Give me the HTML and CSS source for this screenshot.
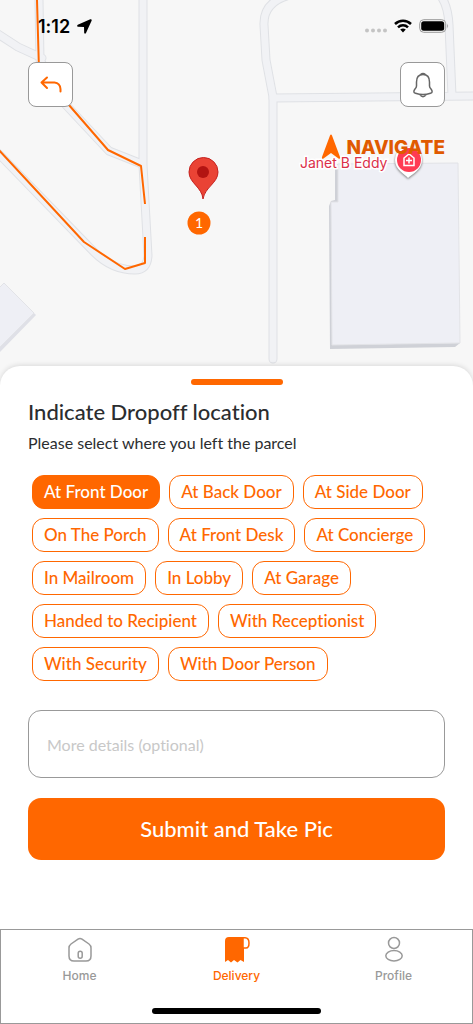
FILE: index.html
```
<!DOCTYPE html>
<html lang="en">
<head>
    <meta charset="utf-8">
    <title>Dropoff location</title>
    <meta name="viewport" content="width=device-width, initial-scale=1">
    <link rel="stylesheet" href="styles.css">
</head>
<body>
    <div class="screen">
        <section class="map">
            <svg class="map-canvas" viewBox="0 0 473 388" preserveAspectRatio="xMidYMin slice">
                <!-- roads: outline first, then the lighter fill -->
                <g class="road-edge">
                    <path d="M-5 32L18 47L42 58M39 0L40 60L65 104L109 151L142 164"/>
                    <path d="M143 -5V165L148 256Q147 270 135 270Q112 270 94 252L-5 150"/>
                    <path d="M290 -5Q263 2 264 25L266 60L273 97V359"/>
                    <path d="M273 98L480 96M440 -5Q448 5 449 25L452 96"/>
                </g>
                <g class="road">
                    <path d="M-5 32L18 47L42 58M39 0L40 60L65 104L109 151L142 164"/>
                    <path d="M143 -5V165L148 256Q147 270 135 270Q112 270 94 252L-5 150"/>
                    <path d="M290 -5Q263 2 264 25L266 60L273 97V359"/>
                    <path d="M273 98L480 96M440 -5Q448 5 449 25L452 96"/>
                </g>
                <!-- buildings -->
                <path class="wall" d="M4 283L36 315L0 352V340L34 313z"/>
                <path class="roof" d="M-2 289L4 283L34 313L-2 349z"/>
                <path class="wall-dark" d="M335 166L338 164V202H332L333 345L460 343L455 347L330 349L329 206L331 201L335 200z"/>
                <path class="roof" d="M338 164L458 163L460 343L332 345L331 202H338z"/>
                <!-- route -->
                <path class="route" d="M37 0L39 70L62 97L108 150L141 166L145 204"/>
                <path class="route" d="M-2 149L84 242L125 269L145 263V237"/>
                <!-- dropoff pin -->
                <path class="pin" d="M203 199C202 187 189 183 189 172A14 14 0 0 1 218 172C218 183 205 187 203 199z"/>
                <circle class="pin-dot" cx="203" cy="172" r="6"/>
                <circle class="stop" cx="199" cy="223" r="11.500"/>
                <text class="stop-number" x="199" y="228">1</text>
                <!-- place marker -->
                <path class="place" d="M408 178C405 174 395 170 395 160A13 13 0 0 1 422 160C422 170 412 174 408 178z"/>
                <circle class="place-dot" cx="409" cy="160" r="12"/>
                <path class="place-icon" d="M404 165.500V158L409 154L414 158V165.500zM409 157.500V163.500M406 160.500H412"/>
                <text class="place-name" x="300" y="168">Janet B Eddy</text>
            </svg>
            <div class="map-overlay">
                <div class="status">
                    <div class="status-group">
                        <span class="time">1:12</span>
                        <svg width="15" height="15" viewBox="0 0 15 15"><path d="M13.300 0.300L0.800 5.800Q-0.600 7.200 1 7.800L7 8L7.200 14Q8 15.500 9 14L14.700 1.500Q14.800 -0.200 13.300 0.300z"/></svg>
                    </div>
                    <div class="status-group">
                        <svg width="22" height="16" viewBox="0 0 22 16" fill="#c4c4c4"><circle cx="2" cy="12.500" r="2"/><circle cx="8" cy="12.500" r="2"/><circle cx="14" cy="12.500" r="2"/><circle cx="20" cy="12.500" r="2"/></svg>
                        <svg width="18" height="14" viewBox="0 0 18 14"><g fill="none" stroke="#000" stroke-width="2.500"><path d="M1 5A11.500 11.500 0 0 1 17 5M4 8.300A7.200 7.200 0 0 1 14 8.300"/></g><path d="M9 13.500L6.200 10.600Q9 8.600 11.800 10.600z"/></svg>
                        <svg width="30" height="14" viewBox="0 0 30 14"><rect x="0.700" y="0.700" width="26" height="12.600" rx="4" fill="#f7f7f7" stroke="#999"/><rect x="2.200" y="2.200" width="23" height="9.600" rx="2.500"/><path d="M28.300 4.500Q30 7 28.300 9.500z" fill="#888"/></svg>
                    </div>
                </div>
                <div class="toolbar">
                    <button type="button" class="square-btn" aria-label="Back">
                        <svg width="24" height="24" viewBox="0 0 24 24" fill="none" stroke="#ff6700" stroke-width="2" stroke-linecap="round" stroke-linejoin="round"><path d="M8 4.500L2.500 9.500L8 15M2.500 9.500H15.500Q21 10 21.500 16V18.500"/></svg>
                    </button>
                    <button type="button" class="square-btn" aria-label="Notifications">
                        <svg width="24" height="28" viewBox="0 0 24 28" fill="none" stroke="#666" stroke-width="1.500" stroke-linejoin="round"><path d="M9.500 3.500Q12 1.500 14.500 3.500M12 3.500Q5.500 3.500 5.500 11V15Q5.500 16.500 4 18Q1.500 21.500 4.500 22.200Q12 25 19.500 22.200Q22.500 21.500 20 18Q18.500 16.500 18.500 15V11Q18.500 3.500 12 3.500zM8.800 23.800Q12 27.500 15.200 23.800"/></svg>
                    </button>
                </div>
                <a href="#" class="navigate">
                    <svg width="20" height="26" viewBox="0 0 20 26"><path d="M9 1.500Q10 -0.500 11 1.500L19 23Q19.500 25.500 17.500 24.500L10 19L2.500 24.500Q0.500 25.500 1 23z" fill="#ff6700"/></svg>
                    NAVIGATE
                </a>
            </div>
        </section>

        <form class="sheet">
            <div class="handle"></div>
            <h1>Indicate Dropoff location</h1>
            <p>Please select where you left the parcel</p>
            <div class="chips">
                <button type="button" class="chip active">At Front Door</button>
                <button type="button" class="chip">At Back Door</button>
                <button type="button" class="chip">At Side Door</button>
                <button type="button" class="chip">On The Porch</button>
                <button type="button" class="chip">At Front Desk</button>
                <button type="button" class="chip">At Concierge</button>
                <button type="button" class="chip">In Mailroom</button>
                <button type="button" class="chip">In Lobby</button>
                <button type="button" class="chip">At Garage</button>
                <button type="button" class="chip">Handed to Recipient</button>
                <button type="button" class="chip">With Receptionist</button>
                <button type="button" class="chip">With Security</button>
                <button type="button" class="chip">With Door Person</button>
            </div>
            <input type="text" class="details" placeholder="More details (optional)" aria-label="More details">
            <button type="submit" class="submit">Submit and Take Pic</button>
        </form>

        <nav class="tabs">
            <div class="tab-row">
                <a href="#" class="tab">
                    <svg width="28" height="28" viewBox="0 0 28 28" fill="none" stroke="#999" stroke-width="1.500"><path d="M12 3.200Q14 1.800 16 3.200L23 8Q25 9.500 25 12V20Q25 25 20 25H8Q3 25 3 20V12Q3 9.500 5 8z"/><rect x="12.200" y="15.200" width="4" height="7" rx="2"/></svg>
                    Home
                </a>
                <a href="#" class="tab current">
                    <svg width="28" height="28" viewBox="0 0 28 28"><path d="M2 5Q2 1 6 1H21V26L17.500 24L14.500 26.500L11 24L8 26.500L5 24L2 26z" fill="#ff6700"/><path d="M20 1.800H22Q26 2 26 7Q26 12 23 12H20z" fill="#fff" stroke="#ff6700" stroke-width="1.500"/></svg>
                    Delivery
                </a>
                <a href="#" class="tab">
                    <svg width="28" height="28" viewBox="0 0 28 28" fill="none" stroke="#999" stroke-width="1.500"><circle cx="14" cy="7" r="5.500"/><ellipse cx="14" cy="19.800" rx="8.200" ry="5.200"/></svg>
                    Profile
                </a>
            </div>
            <div class="home-bar"></div>
        </nav>
    </div>

    <script>
        const chips = document.querySelectorAll('.chip');

        chips.forEach(function(chip) {
            chip.addEventListener('click', function() {
                chips.forEach(function(c) {
                    c.classList.remove('active');
                });
                chip.classList.add('active');
            });
        });
    </script>
</body>
</html>
```
FILE: styles.css
```
* {
    box-sizing: border-box;
}
body {
    margin: 0;
    font-family: "Google Sans", Lato, sans-serif;
    font-variant-ligatures: none;
    color: #2b2d2f;
    background-color: #fff;
}
button, input {
    font-family: inherit;
    font-variant-ligatures: none;
}
button {
    cursor: pointer;
}
.screen {
    min-height: 100vh;
    display: flex;
    flex-direction: column;
}

/* map */
.map {
    position: relative;
    height: 388px;
    margin-bottom: -22px;
    background-color: #f7f7f7;
    overflow: hidden;
}
.map-canvas {
    position: absolute;
    top: 0;
    left: 0;
    width: 100%;
    height: 100%;
}
.road-edge, .road, .route {
    fill: none;
    stroke-linecap: round;
    stroke-linejoin: round;
}
.road-edge {
    stroke: #dfe1e5;
    stroke-width: 9px;
}
.road {
    stroke: #f1f2f5;
    stroke-width: 7px;
}
.route {
    stroke: #ff6700;
    stroke-width: 2px;
    stroke-linecap: butt;
}
.roof {
    fill: #eeeff5;
    stroke: #e2e3e7;
}
.wall {
    fill: #dfe0e7;
}
.wall-dark {
    fill: #cfd1d7;
}
.pin {
    fill: #ea4335;
    stroke: #c5221f;
}
.pin-dot {
    fill: #b31412;
}
.stop {
    fill: #ff6700;
}
.stop-number {
    fill: #fff;
    font-size: 14px;
    text-anchor: middle;
}
.place {
    fill: #fff;
    filter: drop-shadow(0 1px 1px #777);
}
.place-dot {
    fill: #ff3b53;
}
.place-icon {
    fill: none;
    stroke: #fff;
    stroke-width: 1.5px;
}
.place-name {
    font-family: Inter, sans-serif;
    font-size: 14px;
    fill: #db3049;
    stroke: #fff;
    stroke-width: 3px;
    paint-order: stroke;
}
.map-overlay {
    position: relative;
    padding: 14px 28px 0;
}
.status {
    display: flex;
    align-items: center;
    justify-content: space-between;
    height: 24px;
    margin-right: -4px;
    padding-left: 10px;
}
.status-group {
    display: flex;
    align-items: center;
    gap: 7px;
}
.time {
    font-family: Inter, sans-serif;
    font-size: 18px;
    font-weight: 600;
    color: #000;
}
.toolbar {
    display: flex;
    justify-content: space-between;
    margin-top: 24px;
}
.square-btn {
    display: flex;
    align-items: center;
    justify-content: center;
    width: 45px;
    height: 45px;
    padding: 0;
    border: 1px solid #999;
    border-radius: 8px;
    background-color: #fff;
}
.navigate {
    display: flex;
    align-items: center;
    justify-content: flex-end;
    gap: 5px;
    margin-top: 27px;
    font-family: Inter, sans-serif;
    font-size: 19px;
    font-weight: 800;
    color: #e05a00;
    text-decoration: none;
}

/* bottom sheet */
.sheet {
    position: relative;
    flex: 1;
    display: flex;
    flex-direction: column;
    padding: 13px 28px 68px;
    border-radius: 20px 20px 0 0;
    background-color: #fff;
    box-shadow: 0 -1px 5px rgba(0, 0, 0, 0.12);
}
.handle {
    align-self: center;
    width: 92px;
    height: 6px;
    border-radius: 3px;
    background-color: #ff6700;
}
h1 {
    margin: 13px 0 0;
    font-size: 22px;
    font-weight: 500;
    line-height: 28px;
}
p {
    margin: 6px 0 0;
    font-size: 16px;
    line-height: 22px;
}
.chips {
    display: flex;
    flex-wrap: wrap;
    gap: 9px;
    margin: 21px 4px 0;
}
.chip {
    height: 34px;
    padding: 0 11px 2px;
    border: 1px solid #ff6700;
    border-radius: 12px;
    background-color: #fff;
    color: #ff6700;
    font-size: 17px;
    font-weight: 500;
}
.chip.active {
    background-color: #ff6700;
    color: #fff;
}
.details {
    width: 100%;
    height: 68px;
    margin-top: 29px;
    padding: 0 18px;
    border: 1px solid #999;
    border-radius: 13px;
    font-size: 16px;
}
.details::placeholder {
    color: #c8c8c8;
}
.submit {
    height: 62px;
    margin-top: 20px;
    padding-bottom: 2px;
    border: none;
    border-radius: 13px;
    background-color: #ff6700;
    color: #fff;
    font-size: 22px;
    font-weight: 500;
}

/* tab bar */
.tabs {
    position: relative;
    height: 95px;
    padding: 6px 0 9px;
    display: flex;
    flex-direction: column;
    align-items: center;
    justify-content: space-between;
    border: 1px solid #999;
    background-color: #fff;
}
.tab-row {
    display: flex;
    width: 100%;
}
.tab {
    flex: 1;
    display: flex;
    flex-direction: column;
    align-items: center;
    gap: 5px;
    font-family: Inter, sans-serif;
    font-size: 12px;
    font-weight: 500;
    line-height: 14px;
    color: #999;
    text-decoration: none;
}
.tab.current {
    color: #ff6700;
}
.home-bar {
    width: 169px;
    height: 6px;
    border-radius: 3px;
    background-color: #000;
}
```
